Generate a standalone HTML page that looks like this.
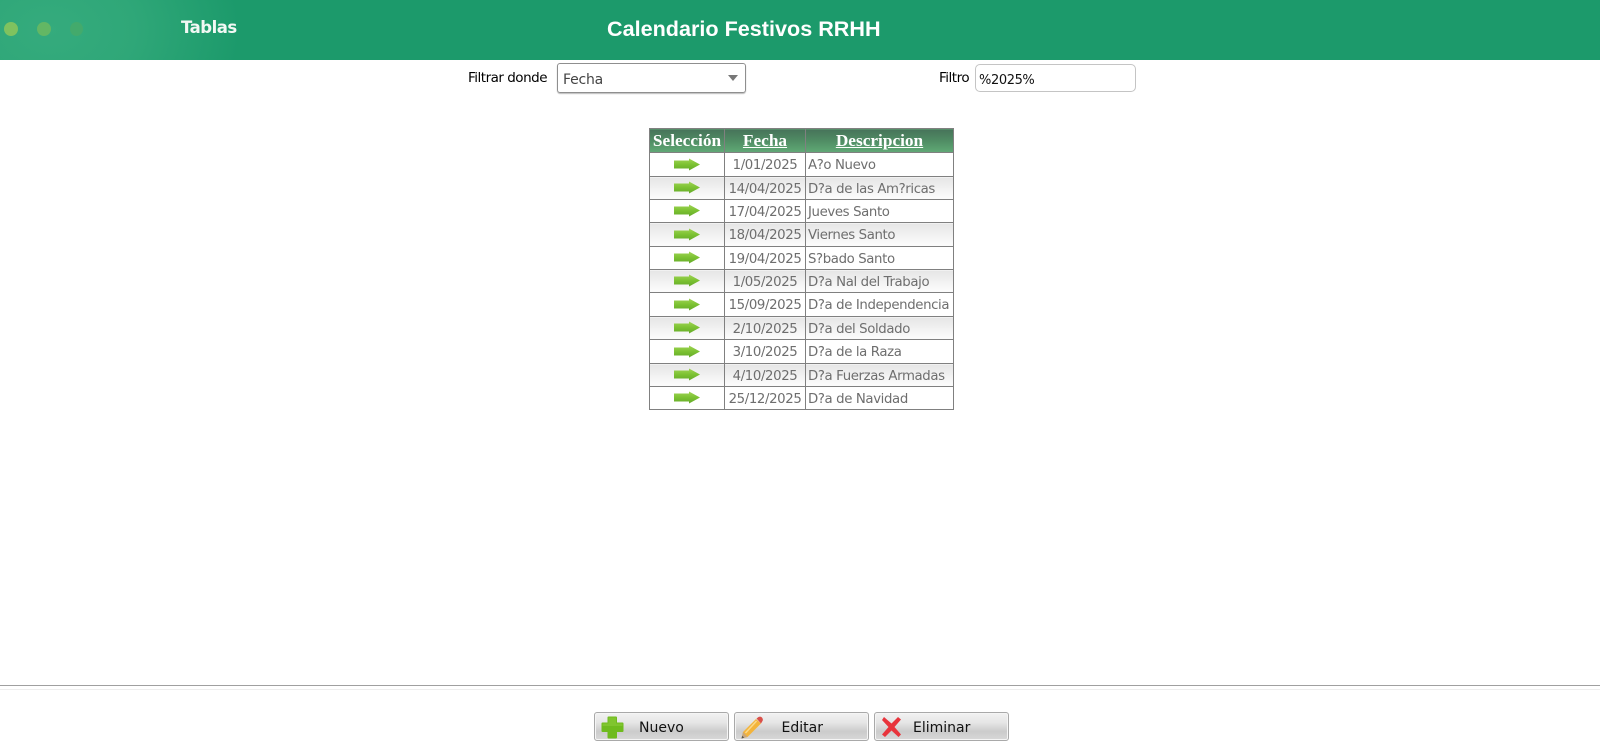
<!DOCTYPE html>
<html><head><meta charset="utf-8">
<style>
html,body{margin:0;padding:0;background:#fff;width:1600px;height:747px;overflow:hidden}
body{position:relative;font-family:"DejaVu Sans","Liberation Sans",sans-serif}
.a{position:absolute;white-space:nowrap}
.hdr{left:0;top:0;width:1600px;height:60px;background:radial-gradient(ellipse 190px 135px at 50px 30px,#35ab7d 0%,#2fa778 45%,#1c9a6b 100%)}
.dot{position:absolute;border-radius:50%}
.l{font-size:13.5px;line-height:16px;letter-spacing:-.5px;color:#000}
table{position:absolute;left:649px;top:128px;border-collapse:collapse;table-layout:fixed;width:304px}
td,th{border:1px solid #808080;padding:0;overflow:hidden;white-space:nowrap}
th{height:24px;padding-top:1px;box-sizing:border-box;font-family:"Liberation Serif",serif;font-size:17.300px;font-weight:bold;color:#fff;background:linear-gradient(#47735a 0%,#4f8a63 45%,#5ba170 85%,#63a878 100%)}
th u{text-decoration:underline}
td{font-size:13.3px;letter-spacing:-.38px;color:#6e6e6e;font-family:"DejaVu Sans",sans-serif;padding-top:2px;box-sizing:border-box}
td.c{text-align:center}
td.d{padding-left:2px}
tr.e td{background:linear-gradient(#e6e6e6,#fbfbfb 90%)}
td svg{display:block;margin:-3px auto 0}
.h24 td{height:24px}.h23 td{height:23px}
.btn{position:absolute;top:712px;height:29px;width:135px;border:1px solid #a9a9a9;border-radius:3px;box-sizing:border-box;background:linear-gradient(#f2f2f2 0%,#e6e6e6 35%,#cbcbcb 68%,#d8d8d8 100%);box-shadow:inset 0 0 0 1px #f5f5f5}
.btn span{position:absolute;top:6.5px;font-size:14px;color:#111;line-height:16px}
.btn svg{position:absolute}
</style></head>
<body>
<div class="a hdr">
<div class="dot" style="left:4px;top:22px;width:14px;height:14px;background:#7fc25f"></div>
<div class="dot" style="left:37px;top:22px;width:14px;height:14px;background:#63b764"></div>
<div class="dot" style="left:70px;top:22px;width:13px;height:14px;background:#43aa6c"></div>
</div>
<div class="a" style="left:181px;top:18px;font:bold 16.5px/20px 'DejaVu Sans',sans-serif;letter-spacing:-.5px;color:#f2f8f4">Tablas</div>
<div class="a" style="left:607px;top:16px;font:bold 21.6px/26px 'Liberation Sans',sans-serif;color:#fff">Calendario Festivos RRHH</div>

<div class="a l" style="left:468px;top:70px">Filtrar donde</div>
<div class="a" style="left:557px;top:63px;width:189px;height:30px;box-sizing:border-box;border:1px solid #8f8f8f;border-radius:3px;box-shadow:0 1px 1px #bbb"></div>
<div class="a" style="left:563px;top:72px;font-size:14px;letter-spacing:-.2px;line-height:16px;color:#444">Fecha</div>
<div class="a" style="left:728px;top:75px;width:0;height:0;border-left:5.5px solid transparent;border-right:5.5px solid transparent;border-top:6px solid #777"></div>
<div class="a l" style="left:939px;top:70px">Filtro</div>
<div class="a" style="left:975px;top:64px;width:161px;height:28px;box-sizing:border-box;border:1px solid #c4c4c4;border-radius:5px"></div>
<div class="a" style="left:979px;top:73px;font-size:13px;letter-spacing:-.4px;line-height:16px;color:#111">%2025%</div>

<svg width="0" height="0" style="position:absolute"><defs>
<linearGradient id="g" x1="0" y1="0" x2="0" y2="1"><stop offset="0" stop-color="#a0d455"/><stop offset=".5" stop-color="#7cc232"/><stop offset="1" stop-color="#64aa2a"/></linearGradient>
<symbol id="ar" viewBox="0 0 26 13"><path d="M0 2.500H15V0.500L26 6.500L15 12.500V10.500H0Z" fill="url(#g)"/></symbol>
</defs></svg>

<table>
<colgroup><col style="width:75px"><col style="width:81px"><col style="width:148px"></colgroup>
<tr><th>Selección</th><th><u>Fecha</u></th><th><u>Descripcion</u></th></tr>
<tr class="h24"><td><svg width="26" height="13"><use href="#ar"/></svg></td><td class="c">1/01/2025</td><td class="d">A?o Nuevo</td></tr>
<tr class="e h23"><td><svg width="26" height="13"><use href="#ar"/></svg></td><td class="c">14/04/2025</td><td class="d">D?a de las Am?ricas</td></tr>
<tr class="h23"><td><svg width="26" height="13"><use href="#ar"/></svg></td><td class="c">17/04/2025</td><td class="d">Jueves Santo</td></tr>
<tr class="e h24"><td><svg width="26" height="13"><use href="#ar"/></svg></td><td class="c">18/04/2025</td><td class="d">Viernes Santo</td></tr>
<tr class="h23"><td><svg width="26" height="13"><use href="#ar"/></svg></td><td class="c">19/04/2025</td><td class="d">S?bado Santo</td></tr>
<tr class="e h23"><td><svg width="26" height="13"><use href="#ar"/></svg></td><td class="c">1/05/2025</td><td class="d">D?a Nal del Trabajo</td></tr>
<tr class="h24"><td><svg width="26" height="13"><use href="#ar"/></svg></td><td class="c">15/09/2025</td><td class="d">D?a de Independencia</td></tr>
<tr class="e h23"><td><svg width="26" height="13"><use href="#ar"/></svg></td><td class="c">2/10/2025</td><td class="d">D?a del Soldado</td></tr>
<tr class="h24"><td><svg width="26" height="13"><use href="#ar"/></svg></td><td class="c">3/10/2025</td><td class="d">D?a de la Raza</td></tr>
<tr class="e h23"><td><svg width="26" height="13"><use href="#ar"/></svg></td><td class="c">4/10/2025</td><td class="d">D?a Fuerzas Armadas</td></tr>
<tr class="h23"><td><svg width="26" height="13"><use href="#ar"/></svg></td><td class="c">25/12/2025</td><td class="d">D?a de Navidad</td></tr>
</table>

<div class="a" style="left:0;top:685px;width:1600px;height:1px;background:#a0a0a0"></div>
<div class="a" style="left:0;top:689px;width:1600px;height:1px;background:#eeeeee"></div>

<div class="btn" style="left:594px">
<svg style="left:5.500px;top:3px" width="23" height="23" viewBox="0 0 23 23"><path d="M6.500 1.500Q6.500 0.500 7.500 0.500H15Q16 0.500 16 1.500V6.500H21.500Q22.500 6.500 22.500 7.500V15Q22.500 16 21.500 16H16V21.500Q16 22.500 15 22.500H7.500Q6.500 22.500 6.500 21.500V16H1.500Q0.500 16 0.500 15V7.500Q0.500 6.500 1.500 6.500H6.500Z" fill="#6fbb1e"/><path d="M7.500 1.500H15V7.500H21.500V10H1.500V7.500H7.500Z" fill="#8ccb3a" opacity=".6"/></svg>
<span style="left:44px">Nuevo</span></div>
<div class="btn" style="left:734px">
<svg style="left:6px;top:3px" width="23" height="23" viewBox="0 0 23 23"><path d="M15 3L20 7.500L6.500 21L0.500 22.500L2 16Z" fill="#f3b43c"/><path d="M15.500 2.500L17.500 1Q19.500 0 21 1.500Q22.500 3.500 21.500 5L20 7.500Z" fill="#d9504a"/><path d="M2 16L6.500 21L0.500 22.500Z" fill="#c9a77c"/><path d="M0.500 22.500L1.200 19.800L3.200 21.600Z" fill="#555"/><path d="M15.500 5L4.500 17" stroke="#fbd98a" stroke-width="1.500"/></svg>
<span style="left:46.500px">Editar</span></div>
<div class="btn" style="left:874px">
<svg style="left:6.500px;top:4px" width="19" height="20" viewBox="0 0 19 20"><path d="M2 0L9.500 6.500L16 0L19 2.500L12.500 10L19 17.500L16.500 20L9.500 13.500L3 20L0 17.500L6.500 10L0 3Z" fill="#e8343c"/></svg>
<span style="left:38px">Eliminar</span></div>
</body></html>
